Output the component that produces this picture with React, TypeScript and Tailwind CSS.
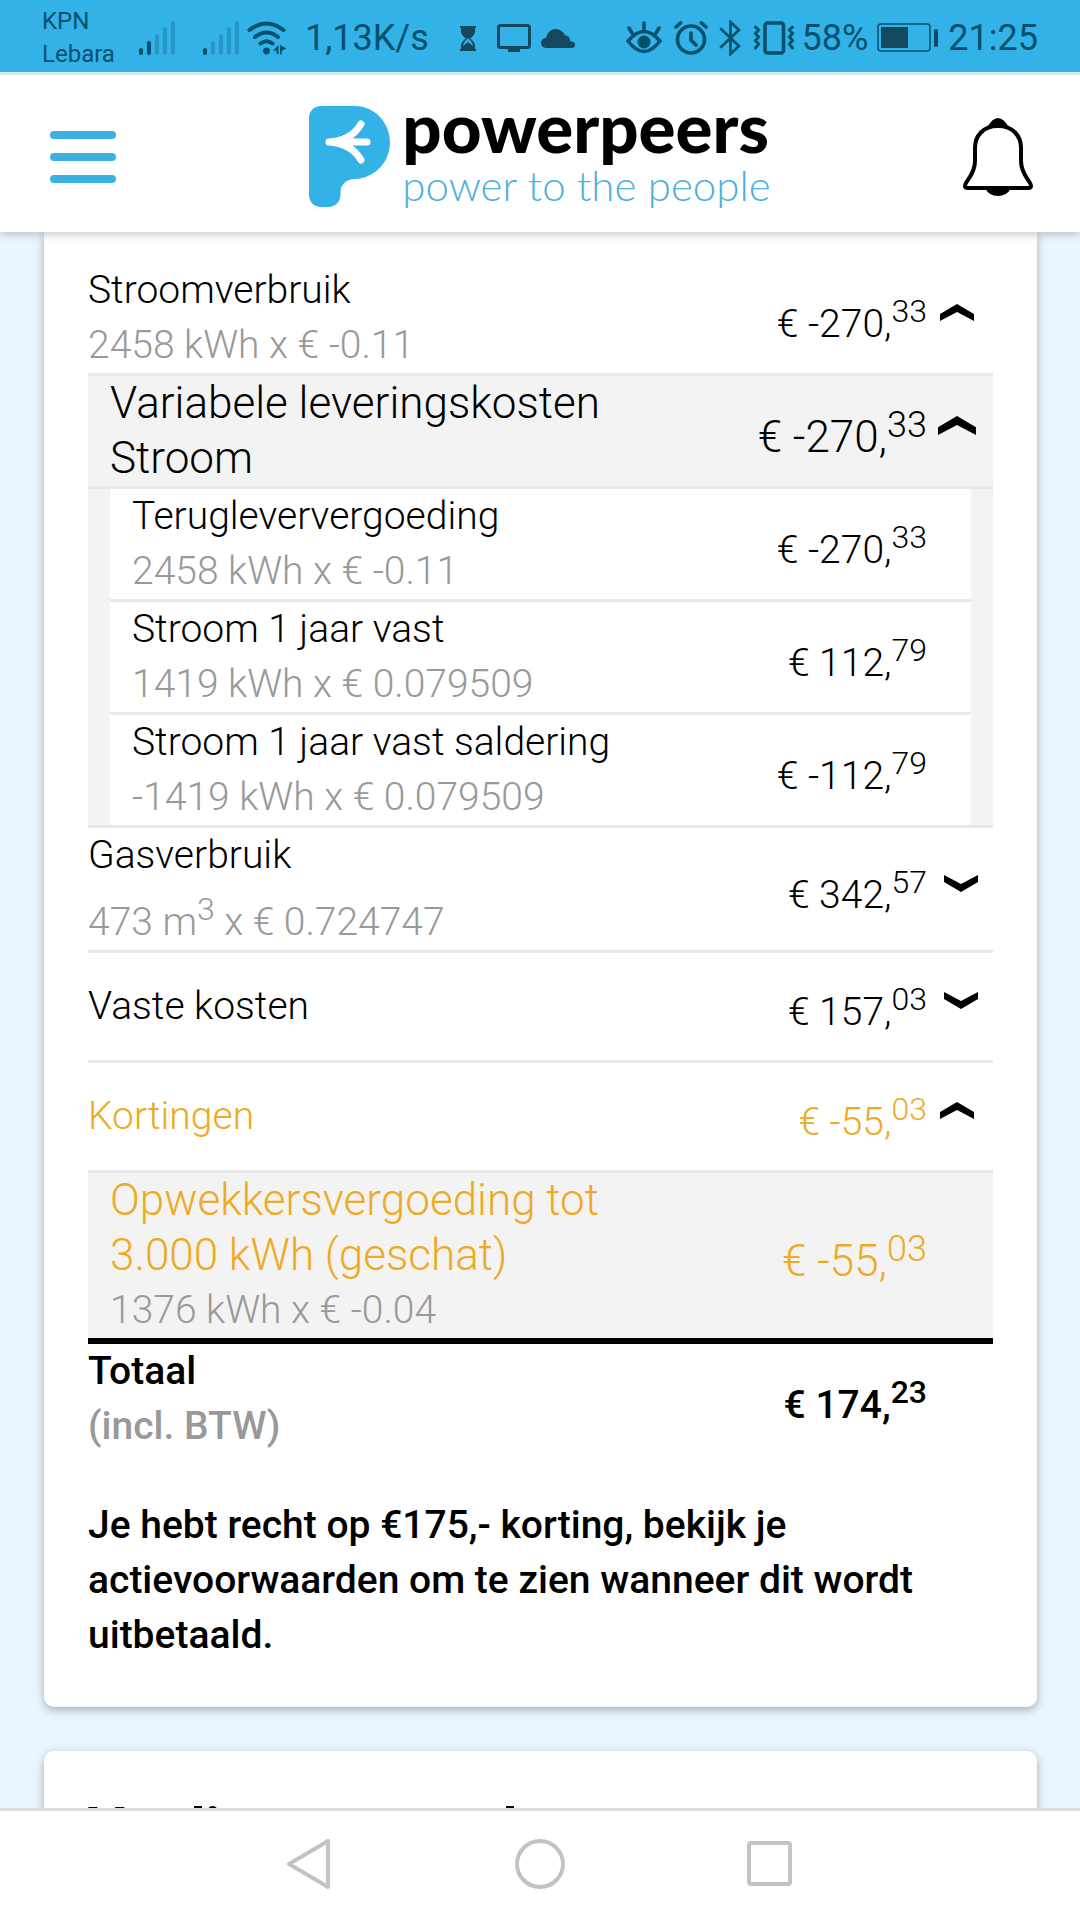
import { useState } from 'react';
import type { ReactNode } from 'react';

interface AmountProps {
  whole: string;
  cents: string;
  large?: boolean;
}

function Amount({ whole, cents, large }: AmountProps) {
  return (
    <span className={large ? 'block pt-3 text-[44px] whitespace-nowrap' : 'block pt-3 whitespace-nowrap'}>
      € {whole},<sup className={large ? 'top-[-15px] text-[36px]' : 'top-[-15px] text-[32px]'}>{cents}</sup>
    </span>
  );
}

interface ToggleProps {
  label: string;
  open: boolean;
  large?: boolean;
  onClick: () => void;
}

function Toggle({ label, open, large, onClick }: ToggleProps) {
  return (
    <button
      type="button"
      aria-label={label}
      aria-expanded={open}
      onClick={onClick}
      className={`flex w-[60px] justify-center pb-3 ${open ? '' : 'pl-2'}`}
    >
      <svg
        viewBox="0 0 34 17"
        className={`${large ? 'w-[38px]' : 'w-[34px]'} ${open ? '' : 'rotate-180'}`}
      >
        <path d="M0 10 17 0 34 10V17L17 8 0 17Z" fill="#000" />
      </svg>
    </button>
  );
}

interface MainRowProps {
  title: string;
  detail?: ReactNode;
  whole: string;
  cents: string;
  open: boolean;
  onToggle: () => void;
  tall?: boolean;
  accent?: boolean;
}

function MainRow({ title, detail, whole, cents, open, onToggle, tall, accent }: MainRowProps) {
  return (
    <tr className={accent ? 'text-[#eeaa22]' : ''}>
      <th
        colSpan={2}
        scope="row"
        className={`border-b-3 border-[#e8e8e7] text-left font-light ${tall ? 'py-[26px]' : ''}`}
      >
        {title}
        {detail && <span className="block text-[#999]">{detail}</span>}
      </th>
      <td className="border-b-3 border-[#e8e8e7] text-right">
        <Amount whole={whole} cents={cents} />
      </td>
      <td colSpan={2} className="border-b-3 border-[#e8e8e7]">
        <Toggle label={title} open={open} onClick={onToggle} />
      </td>
    </tr>
  );
}

const deliveryCosts = [
  { title: 'Terugleververgoeding', detail: '2458 kWh x € -0.11', whole: '-270', cents: '33' },
  { title: 'Stroom 1 jaar vast', detail: '1419 kWh x € 0.079509', whole: '112', cents: '79' },
  { title: 'Stroom 1 jaar vast saldering', detail: '-1419 kWh x € 0.079509', whole: '-112', cents: '79' },
];

function CostTable() {
  const [power, setPower] = useState(true);
  const [delivery, setDelivery] = useState(true);
  const [gas, setGas] = useState(false);
  const [fixed, setFixed] = useState(false);
  const [discounts, setDiscounts] = useState(true);

  return (
    <table className="w-full table-fixed border-separate border-spacing-0">
      <colgroup>
        <col className="w-[22px]" />
        <col />
        <col className="w-[240px]" />
        <col className="w-[44px]" />
        <col className="w-[22px]" />
      </colgroup>
      <tbody>
        <MainRow
          title="Stroomverbruik"
          detail="2458 kWh x € -0.11"
          whole="-270"
          cents="33"
          open={power}
          onToggle={() => setPower(!power)}
        />
        {power && (
          <tr className="bg-[#f3f3f3]">
            <td className="border-b-3 border-[#e8e8e7]" />
            <th scope="row" className="border-b-3 border-[#e8e8e7] text-left text-[44px] font-light">
              Variabele leveringskosten Stroom
            </th>
            <td className="border-b-3 border-[#e8e8e7] text-right">
              <Amount whole="-270" cents="33" large />
            </td>
            <td colSpan={2} className="border-b-3 border-[#e8e8e7]">
              <Toggle label="Variabele leveringskosten" open={delivery} large onClick={() => setDelivery(!delivery)} />
            </td>
          </tr>
        )}
        {power && delivery && deliveryCosts.map((cost, i) => {
          const last = i === deliveryCosts.length - 1;
          return (
            <tr key={cost.title}>
              <td className={`bg-[#f3f3f3] ${last ? 'border-b-3 border-[#e8e8e7]' : ''}`} />
              <th scope="row" className="border-b-3 border-[#e8e8e7] pl-[22px] text-left font-light whitespace-nowrap">
                {cost.title}
                <span className="block text-[#999]">{cost.detail}</span>
              </th>
              <td className="border-b-3 border-[#e8e8e7] text-right">
                <Amount whole={cost.whole} cents={cost.cents} />
              </td>
              <td className="border-b-3 border-[#e8e8e7]" />
              <td className={`bg-[#f3f3f3] ${last ? 'border-b-3 border-[#e8e8e7]' : ''}`} />
            </tr>
          );
        })}
        <MainRow
          title="Gasverbruik"
          detail={<span className="block pt-3">473 m<sup className="top-[-15px] text-[32px]">3</sup> x € 0.724747</span>}
          whole="342"
          cents="57"
          open={gas}
          onToggle={() => setGas(!gas)}
        />
        <MainRow title="Vaste kosten" whole="157" cents="03" tall open={fixed} onToggle={() => setFixed(!fixed)} />
        <MainRow
          title="Kortingen"
          whole="-55"
          cents="03"
          tall
          accent
          open={discounts}
          onToggle={() => setDiscounts(!discounts)}
        />
        {discounts && (
          <tr className="bg-[#f3f3f3] text-[#eeaa22]">
            <td />
            <th scope="row" className="text-left font-light">
              <span className="block text-[44px]">Opwekkersvergoeding tot 3.000 kWh (geschat)</span>
              <span className="block text-[#999]">1376 kWh x € -0.04</span>
            </th>
            <td className="text-right">
              <Amount whole="-55" cents="03" large />
            </td>
            <td colSpan={2} />
          </tr>
        )}
      </tbody>
      <tfoot className="font-medium">
        <tr>
          <th colSpan={2} scope="row" className="border-t-6 border-black text-left font-medium">
            Totaal
            <span className="block text-[#999]">(incl. BTW)</span>
          </th>
          <td className="border-t-6 border-black text-right">
            <Amount whole="174" cents="23" />
          </td>
          <td colSpan={2} className="border-t-6 border-black" />
        </tr>
      </tfoot>
    </table>
  );
}

function Signal({ bars }: { bars: number }) {
  return (
    <svg viewBox="0 0 36 34" className="w-9" stroke="#04506f" strokeWidth="4" strokeLinecap="round">
      {[29, 22, 15, 8, 2].map((top, i) => (
        <path key={top} d={`M${2 + i * 8} ${top}V32`} opacity={i < bars ? 1 : 0.28} />
      ))}
    </svg>
  );
}

function StatusBar() {
  return (
    <div className="flex h-[75px] shrink-0 items-center justify-between border-b-3 border-[#dceff2] bg-[#33b2e8] px-[42px] pt-1 text-[36px] text-[#04506f]">
      <div className="flex items-center">
        <div className="w-[97px] text-[24px] leading-[33px]">
          <div>KPN</div>
          <div>Lebara</div>
        </div>
        <Signal bars={2} />
        <div className="ml-7">
          <Signal bars={1} />
        </div>
        <svg viewBox="0 0 40 34" className="ml-2 w-10" fill="none" stroke="#04506f" strokeWidth="4" strokeLinecap="round">
          <path d="M2.500 9Q19.500-4 36.500 9M8 16Q19.500 7 31 16M13.500 22.500Q19.500 18 25.500 22.500" />
          <circle cx="19.500" cy="30" r="3.400" fill="#04506f" stroke="none" />
          <path d="M26 29.500 31.500 24V33H29.500V29.500ZM33 24V33.500H34.500L35 29.500 39.500 27.500Z" fill="#04506f" stroke="none" />
        </svg>
        <div className="ml-[18px]">1,13K/s</div>
        <svg viewBox="0 0 18 25" className="ml-[30px] w-[18px]" fill="#14485e">
          <path d="M1 0H17V2H16V6Q15 10 11 12.500 15 15 16 19V23H17V25H1V23H2V19Q3 15 7 12.500 3 10 2 6V2H1ZM8.500 12.500Q4.500 16 4 20L9 16 14 20Q13.500 16 9.500 12.500Z" fillRule="evenodd" />
        </svg>
        <svg viewBox="0 0 34 28" className="ml-5 w-[34px]" fill="none" stroke="#14485e" strokeWidth="3">
          <rect x="1.500" y="1.500" width="31" height="22" rx="2" />
          <path d="M11 26H23" strokeWidth="4" />
        </svg>
        <svg viewBox="0 0 34 19" className="ml-[10px] w-[34px]" fill="#14485e">
          <path d="M5 19A5 5 0 0 1 5 9Q7 0 15 0 21 0 24 6.500 28.500 6 29.500 12.500 34 12 34 16 34 19 30 19Z" />
        </svg>
      </div>
      <div className="flex items-center">
        <svg viewBox="0 0 36 34" className="w-9" fill="none" stroke="#04506f" strokeWidth="3.500" strokeLinecap="round">
          <path d="M2 20Q18 1 34 20 18 41 2 20ZM18 2V8M3 7 6 12M33 7 30 12" />
          <circle cx="18" cy="21" r="6.500" fill="#04506f" stroke="none" />
        </svg>
        <svg viewBox="0 0 34 34" className="ml-3 w-[34px]" fill="none" stroke="#04506f" strokeWidth="3.600" strokeLinecap="round">
          <circle cx="17" cy="18.500" r="13.500" />
          <path d="M17 12V19L22 24M2 6 6.500 2M32 6 27.500 2" />
        </svg>
        <svg viewBox="0 0 22 36" className="ml-[11px] w-[22px]" fill="none" stroke="#04506f" strokeWidth="2.600" strokeLinecap="round">
          <path d="M2 9 20 26 11.500 34V2L20 10 2 27" />
        </svg>
        <svg viewBox="0 0 42 34" className="ml-3 w-[42px]" fill="none" stroke="#04506f" strokeWidth="3.600" strokeLinecap="round">
          <rect x="12" y="2" width="18.500" height="30" rx="2.500" />
          <path d="M2.500 6 5.500 9 2.500 12.500 5.500 16 2.500 19.500 5.500 23 2.500 27M39.500 6 36.500 9 39.500 12.500 36.500 16 39.500 19.500 36.500 23 39.500 27" strokeWidth="3" />
        </svg>
        <div className="ml-[7px]">58%</div>
        <svg viewBox="0 0 62 30" className="ml-[9px] w-[62px]" fill="#14485e">
          <rect x="1" y="1" width="52" height="27" rx="3" fill="none" stroke="#04506f" strokeWidth="1.500" />
          <rect x="4" y="4" width="27" height="21" />
          <rect x="57" y="6" width="4" height="18" rx="2" />
        </svg>
        <div className="ml-[9px]">21:25</div>
      </div>
    </div>
  );
}

function Header() {
  return (
    <header className="relative z-10 flex h-[157px] shrink-0 items-center justify-between bg-white px-[47px] pt-[6px] shadow-[0_3px_8px_rgba(0,0,0,0.2)]">
      <button type="button" aria-label="Menu" className="flex w-[70px] flex-col items-start gap-[14px] pl-[3px]">
        <span className="h-2 w-[66px] rounded-full bg-[#3cb1e1]" />
        <span className="h-2 w-[66px] rounded-full bg-[#3cb1e1]" />
        <span className="h-2 w-[66px] rounded-full bg-[#3cb1e1]" />
      </button>
      <a href="#" className="flex items-center gap-3 font-['Lato',sans-serif]">
        <svg viewBox="0 0 81 101" className="w-[81px]">
          <path d="M12 0H46C66 0 81 17 81 36.500S66 72 46 73C37 73 31.500 79 31.500 86V89C31.500 96 26 101 19 101H12C5 101 0 96 0 89V12C0 5 5 0 12 0Z" fill="#33b2e8" />
          <path d="M20 36H58M20 36Q42 35 52 18M20 36Q42 37 52 54" fill="none" stroke="#fff" strokeWidth="7" strokeLinecap="round" />
          <path d="M22 32.500Q34 31 40 26L46 36 40 46Q34 41 22 39.500Z" fill="#fff" />
        </svg>
        <span className="flex flex-col">
          <span className="text-[69px] leading-[56px] font-black text-black">powerpeers</span>
          <span className="text-[42px] leading-[60px] font-light text-[#4bb0dc]">power to the people</span>
        </span>
      </a>
      <button type="button" aria-label="Meldingen" className="w-[70px]">
        <svg viewBox="0 0 70 78" className="w-[70px]">
          <path d="M35 8C20 8 12 18 12 30V43C12 57 2 63 2 68Q2 70 5 70H65Q68 70 68 68C68 63 58 57 58 43V30C58 18 50 8 35 8Z" fill="none" stroke="#000" strokeWidth="4" />
          <path d="M24 10Q29 0 35 0T46 10Q35 7 24 10ZM22 70H48Q44 78 35 78T22 70Z" />
        </svg>
      </button>
    </header>
  );
}

function NavBar() {
  return (
    <nav className="flex h-28 shrink-0 items-center justify-center gap-[180px] border-t-3 border-[#dedede] bg-white pb-[3px]">
      <button type="button" aria-label="Terug">
        <svg viewBox="0 0 50 50" className="w-[50px]" fill="none" stroke="#c3c3c3" strokeWidth="4" strokeLinejoin="round">
          <path d="M4 25 43 2V48Z" />
        </svg>
      </button>
      <button type="button" aria-label="Start">
        <svg viewBox="0 0 50 50" className="w-[50px]" fill="none" stroke="#c3c3c3" strokeWidth="4">
          <circle cx="25" cy="25" r="23" />
        </svg>
      </button>
      <button type="button" aria-label="Recent">
        <svg viewBox="0 0 50 50" className="w-[50px]" fill="none" stroke="#c3c3c3" strokeWidth="4">
          <rect x="4" y="4" width="41" height="41" rx="2" />
        </svg>
      </button>
    </nav>
  );
}

export default function App() {
  return (
    <div className="flex h-screen flex-col overflow-hidden bg-[#eaf6fd] font-['Roboto',sans-serif]">
      <StatusBar />
      <Header />
      <main className="flex min-h-0 flex-1 flex-col gap-11 overflow-hidden pr-[43px] pl-11">
        <section className="shrink-0 rounded-b-[10px] bg-white px-11 pt-[31px] pb-11 text-[39px] leading-[55px] font-light text-black shadow-[0_3px_10px_rgba(0,0,0,0.3)]">
          <CostTable />
          <p className="pt-11 font-medium">
            Je hebt recht op €175,- korting, bekijk je actievoorwaarden om te zien wanneer dit wordt uitbetaald.
          </p>
        </section>
        <section className="shrink-0 rounded-[10px] bg-white px-11 py-11 text-black shadow-[0_3px_10px_rgba(0,0,0,0.3)]">
          <h2 className="text-[56px] leading-[66px] font-bold">Verdien een week</h2>
        </section>
      </main>
      <NavBar />
    </div>
  );
}
